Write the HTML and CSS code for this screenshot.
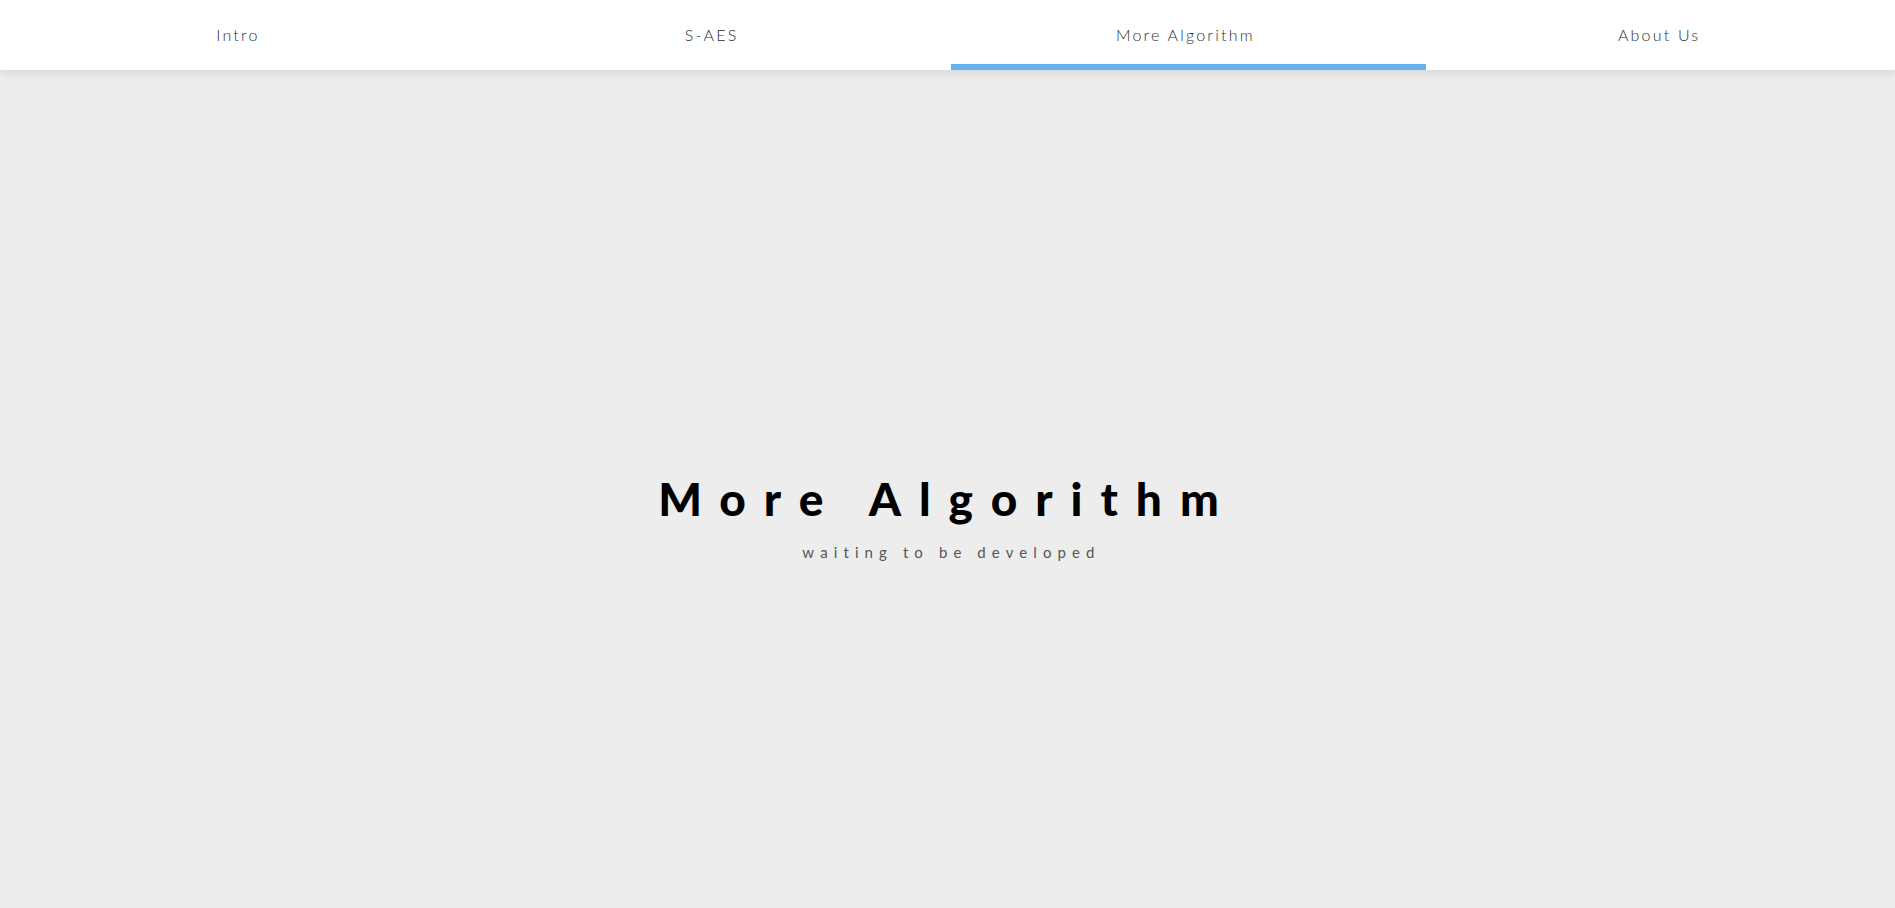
FILE: index.html
```html
<!DOCTYPE html>
<html lang="en">
<head>
<meta charset="utf-8">
<title>More Algorithm</title>
<link rel="stylesheet" href="styles.css">
</head>
<body>
<nav class="tabs">
  <a class="tab" href="#">Intro</a>
  <a class="tab" href="#">S-AES</a>
  <a class="tab tab-active" href="#">More Algorithm</a>
  <a class="tab" href="#">About Us</a>
  <span class="tab-indicator"></span>
</nav>
<main class="page">
  <div class="hero">
    <h1 class="hero-title">More Algorithm</h1>
    <p class="hero-sub">waiting to be developed</p>
  </div>
</main>
</body>
</html>
```
FILE: styles.css
```css
html, body {
  margin: 0;
  padding: 0;
  height: 100%;
}
body {
  background: #ededed;
  font-family: "Lato", "DejaVu Sans", sans-serif;
  overflow: hidden;
}
.tabs {
  position: relative;
  z-index: 2;
  height: 70px;
  background: #ffffff;
  display: grid;
  grid-template-columns: repeat(4, 1fr);
  box-shadow: 0 2px 10px rgba(0, 0, 0, 0.12);
}
.tab {
  display: flex;
  align-items: center;
  justify-content: center;
  padding-bottom: 2px;
  padding-left: 2px;
  color: #2e2e2e;
  text-decoration: none;
  font-size: 16px;
  font-weight: 300;
  letter-spacing: 2.2px;
}
.tab-indicator {
  position: absolute;
  left: 951px;
  bottom: 0;
  width: 475px;
  height: 6px;
  background: #64b2f0;
}
.page {
  height: calc(100% - 70px);
  display: flex;
  justify-content: center;
}
.hero {
  padding-top: 406px;
  text-align: center;
}
.hero-title {
  margin: 0;
  font-size: 46px;
  font-weight: 900;
  line-height: 1;
  color: #000000;
  letter-spacing: 18px;
}
.hero-sub {
  margin: 21px 0 0;
  font-size: 15px;
  color: #555555;
  letter-spacing: 6.1px;
  padding-left: 8px;
}
```
